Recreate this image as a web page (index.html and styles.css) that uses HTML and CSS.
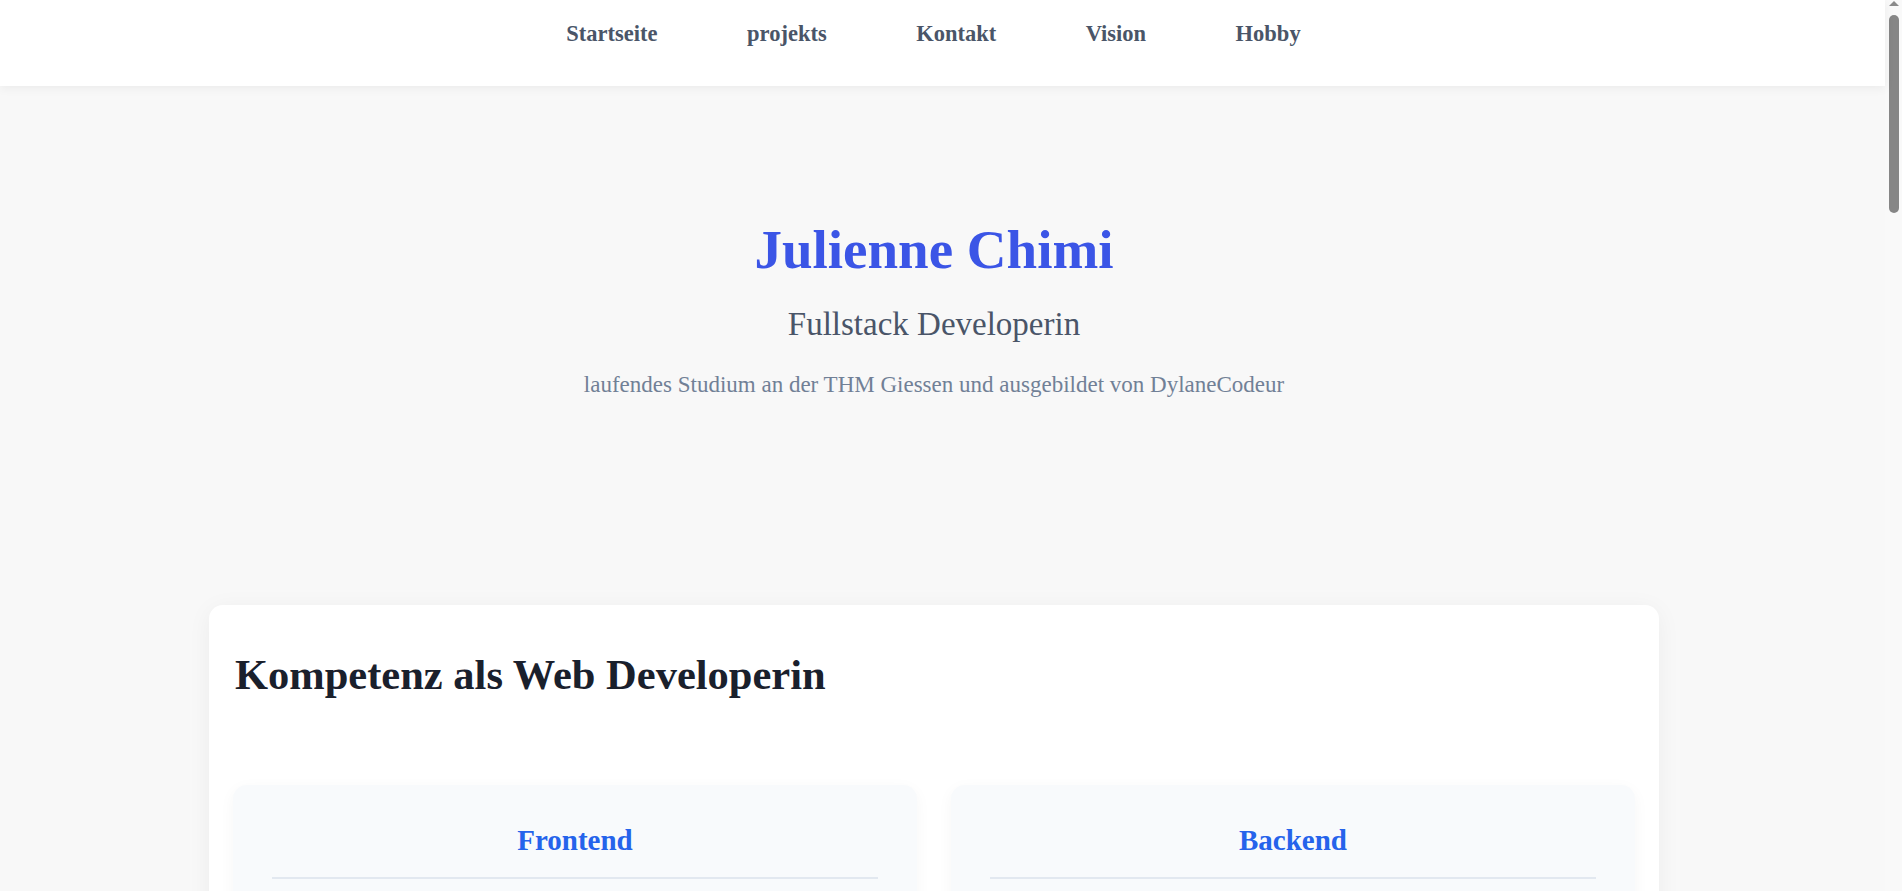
FILE: index.html
```html
<!DOCTYPE html>
<html lang="de">
<head>
<meta charset="utf-8">
<title>Julienne Chimi</title>
<link rel="stylesheet" href="styles.css">
</head>
<body>
<div class="viewport">
  <header class="topbar">
    <nav class="nav">
      <a class="nav-link" href="#">Startseite</a>
      <a class="nav-link" href="#">projekts</a>
      <a class="nav-link" href="#">Kontakt</a>
      <a class="nav-link" href="#">Vision</a>
      <a class="nav-link" href="#">Hobby</a>
    </nav>
  </header>
  <main class="page">
    <section class="hero">
      <h1 class="hero-title">Julienne Chimi</h1>
      <p class="hero-role">Fullstack Developerin</p>
      <p class="hero-note">laufendes Studium an der THM Giessen und ausgebildet von DylaneCodeur</p>
    </section>
    <section class="card">
      <h2 class="card-title">Kompetenz als Web Developerin</h2>
      <div class="skills">
        <div class="skill-box">
          <h3 class="skill-title">Frontend</h3>
          <ul class="skill-list">
            <li>HTML5 &amp; CSS3</li>
            <li>JavaScript</li>
            <li>React</li>
            <li>Vue.js</li>
            <li>Tailwind CSS</li>
          </ul>
        </div>
        <div class="skill-box">
          <h3 class="skill-title">Backend</h3>
          <ul class="skill-list">
            <li>Node.js</li>
            <li>Express</li>
            <li>PHP</li>
            <li>MySQL</li>
            <li>MongoDB</li>
          </ul>
        </div>
      </div>
    </section>
  </main>
</div>
<div class="scrollbar" aria-hidden="true">
  <span class="scroll-arrow"></span>
  <span class="scroll-thumb"></span>
</div>
</body>
</html>
```

FILE: styles.css
```css
* { box-sizing: border-box; }
html, body { margin: 0; padding: 0; }
body {
  background: #f8f8f8;
  font-family: "Liberation Serif", "DejaVu Serif", serif;
  color: #1a202c;
  display: flex;
  align-items: flex-start;
}
.viewport {
  flex: 1 1 auto;
  min-width: 0;
}
.topbar {
  background: #ffffff;
  height: 86px;
  box-shadow: 0 2px 10px rgba(0, 0, 0, 0.06);
  position: relative;
  z-index: 2;
}
.nav {
  display: flex;
  justify-content: center;
  align-items: center;
  gap: 89.5px;
  height: 68px;
  padding-right: 18px;
}
.nav-link {
  color: #4a5568;
  font-weight: 700;
  font-size: 22.5px;
  line-height: 30px;
  text-decoration: none;
}
.page {
  padding: 0 226px 80px 209px;
}
.hero {
  text-align: center;
  padding: 130px 0 205px;
}
.hero-title {
  margin: 0;
  color: #3b55e6;
  font-size: 55px;
  line-height: 67px;
  font-weight: 700;
}
.hero-role {
  margin: 21px 0 0;
  color: #4a5568;
  font-size: 33px;
  line-height: 40px;
}
.hero-note {
  margin: 26px 0 0;
  color: #718096;
  font-size: 23px;
  line-height: 30px;
}
.card {
  background: #ffffff;
  border-radius: 14px;
  box-shadow: 0 4px 24px rgba(0, 0, 0, 0.05);
  padding: 45px 24px 40px 24px;
}
.card-title {
  margin: 0 0 0 2px;
  font-size: 42.5px;
  line-height: 50px;
  font-weight: 700;
  color: #1a202c;
}
.skills {
  display: grid;
  grid-template-columns: 1fr 1fr;
  gap: 34px;
  margin-top: 85px;
}
.skill-box {
  background: #f8fafc;
  border-radius: 14px;
  box-shadow: 0 4px 16px rgba(0, 0, 0, 0.04);
  padding: 37px 39px 30px;
}
.skill-title {
  margin: 0;
  text-align: center;
  color: #2563eb;
  font-size: 29px;
  line-height: 36px;
  font-weight: 700;
  padding-bottom: 19px;
  border-bottom: 2px solid #e2e8f0;
}
.skill-list {
  list-style: none;
  margin: 16px 0 0;
  padding: 0;
  font-size: 20px;
  color: #4a5568;
}
.skill-list li { padding: 10px 0; }
.scrollbar {
  flex: 0 0 17px;
  height: 891px;
  background: #f9f9f9;
  display: flex;
  flex-direction: column;
  align-items: center;
  padding-top: 1px;
}
.scroll-arrow {
  width: 0;
  height: 0;
  border-left: 5px solid transparent;
  border-right: 5px solid transparent;
  border-bottom: 5px solid #8a8a8a;
}
.scroll-thumb {
  margin-top: 9px;
  width: 10px;
  height: 198px;
  border-radius: 5px;
  background: #868686;
}
```
